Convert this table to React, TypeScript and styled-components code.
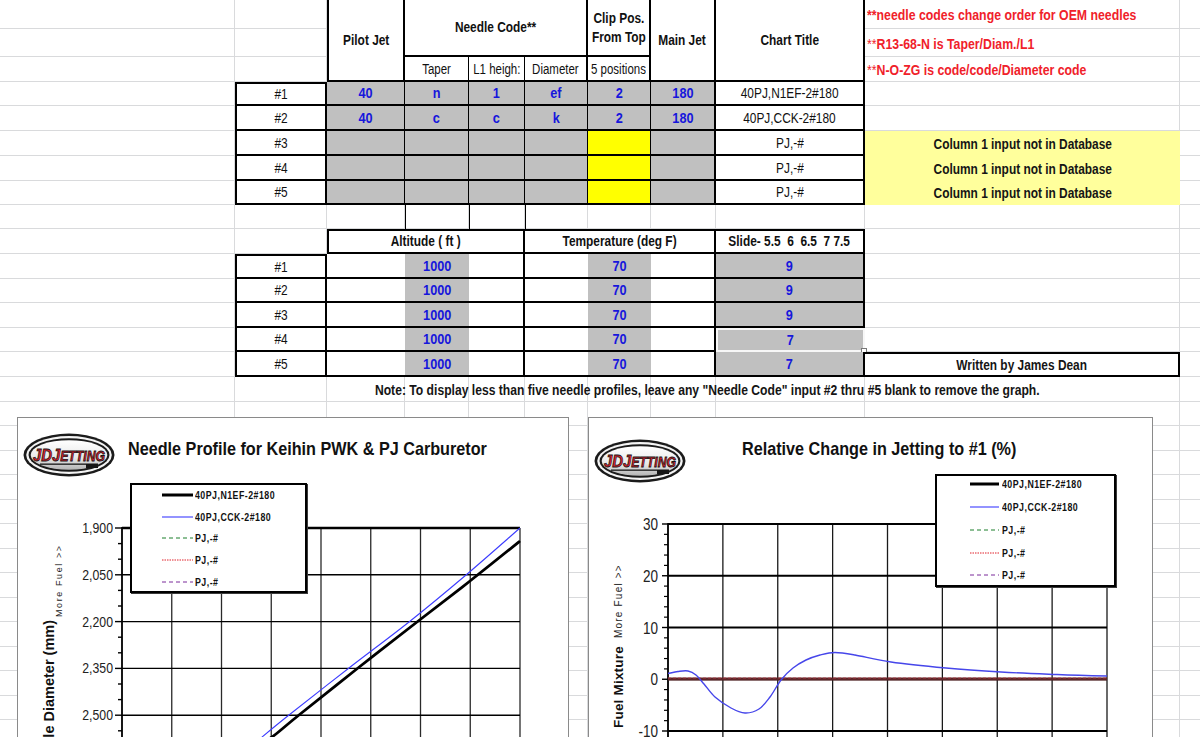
import React from "react";
import styled, { createGlobalStyle, css } from "styled-components";

const SANS = `"Liberation Sans", Arial, Helvetica, sans-serif`;

const GlobalStyle = createGlobalStyle`
  *, *::before, *::after { box-sizing: border-box; }
  html, body { margin: 0; padding: 0; background: #ffffff; }
  body { font-family: ${SANS}; color: #000; }
`;

/* Arial-Narrow look: Liberation Sans compressed horizontally */
const squeeze = (origin: string, k = 0.82) => css`
  display: inline-block;
  transform: scaleX(${k});
  transform-origin: ${origin};
`;

const COLS = [235, 92, 78, 64, 56, 63, 63, 65, 149, 315, 40];
const ROWS = [29, 28, 25, 24, 25, 25, 25, 24, 24, 25, 25, 24, 25, 24, 25, 25, 24, 25, 24, 25, 24, 25, 24, 25, 24, 25, 24, 25, 24, 25];

const Sheet = styled.div`
  position: relative;
  width: 1200px;
  height: 737px;
  overflow: hidden;
  display: grid;
  grid-template-columns: ${COLS.map((w) => `${w}px`).join(" ")};
  grid-template-rows: ${ROWS.map((h) => `${h}px`).join(" ")};
  background: #fff;
`;

const GridCell = styled.div<{ $r: number; $c: number }>`
  grid-row: ${(p) => p.$r + 1};
  grid-column: ${(p) => p.$c + 1};
  border-right: 1px solid #d9dadc;
  border-bottom: 1px solid #d9dadc;
`;

type Fill = "none" | "white" | "gray" | "yellow" | "pale";
const FILL: Record<Fill, string> = {
  none: "transparent",
  white: "#ffffff",
  gray: "#c0c0c0",
  yellow: "#ffff00",
  pale: "#ffff9c",
};

interface CellProps {
  $r: number;
  $c: number;
  $rs?: number;
  $cs?: number;
  $bt?: number;
  $br?: number;
  $bb?: number;
  $bl?: number;
  $fill?: Fill;
  $left?: boolean;
  $sel?: boolean;
}

const Cell = styled.div<CellProps>`
  grid-row: ${(p) => `${p.$r + 1} / span ${p.$rs ?? 1}`};
  grid-column: ${(p) => `${p.$c + 1} / span ${p.$cs ?? 1}`};
  background: ${(p) => FILL[p.$fill ?? "none"]};
  border-style: solid;
  border-color: ${(p) => (p.$sel ? "#f7f7f7" : "#000")};
  border-width: ${(p) =>
    p.$sel ? "2px" : `${p.$bt ?? 0}px ${p.$br ?? 0}px ${p.$bb ?? 0}px ${p.$bl ?? 0}px`};
  display: flex;
  align-items: center;
  justify-content: ${(p) => (p.$left ? "flex-start" : "center")};
  padding-left: ${(p) => (p.$left ? "2px" : "0")};
  white-space: pre;
  position: relative;
  z-index: 1;
`;

const FillHandle = styled.span`
  position: absolute;
  right: -4px;
  bottom: -4px;
  width: 6px;
  height: 6px;
  background: #fff;
  border: 1px solid #777;
  z-index: 2;
`;

const Head = styled.span`
  ${squeeze("center")}
  font-weight: 700;
  font-size: 14.5px;
  line-height: 19px;
  text-align: center;
  color: #111;
`;
const Sub = styled.span`
  ${squeeze("center")}
  font-size: 14px;
  color: #111;
`;
const Label = styled.span`
  ${squeeze("center")}
  font-size: 14.5px;
  color: #111;
`;
const Val = styled.span`
  ${squeeze("center")}
  font-weight: 700;
  font-size: 15.5px;
  color: #1616dc;
`;
const Plain = styled.span`
  ${squeeze("center")}
  font-size: 14.5px;
  color: #111;
`;
const Red = styled.span`
  ${squeeze("left center")}
  color: #f0212a;
  font-weight: 700;
  font-size: 15px;
`;
const Ast = styled.span`
  font-weight: 400;
`;
const Warn = styled.span<{ $big?: boolean }>`
  ${squeeze("center")}
  font-weight: 700;
  font-size: ${(p) => (p.$big ? "14.8px" : "14.5px")};
  color: #151515;
`;

/* ---------------- charts ---------------- */

const ChartFrame = styled.div<{ $x: number; $y: number; $w: number }>`
  position: absolute;
  left: ${(p) => p.$x}px;
  top: ${(p) => p.$y}px;
  width: ${(p) => p.$w}px;
  height: 340px;
  background: #fff;
  border: 1px solid #8a8a8a;
  z-index: 3;
  display: flex;
  flex-direction: column;
`;

const ChartHeader = styled.div<{ $h: number; $pl: number; $pt: number; $gap: number }>`
  height: ${(p) => p.$h}px;
  flex-shrink: 0;
  display: flex;
  align-items: flex-start;
  padding-left: ${(p) => p.$pl}px;
  padding-top: ${(p) => p.$pt}px;
  gap: ${(p) => p.$gap}px;
`;

const ChartTitle = styled.div<{ $mt: number }>`
  ${squeeze("left center", 0.875)}
  margin-top: ${(p) => p.$mt}px;
  font-weight: 700;
  font-size: 18.5px;
  line-height: 20px;
  white-space: nowrap;
  color: #111;
`;

const PlotSvg = styled.svg`
  display: block;
  flex-shrink: 0;
  text {
    font-family: ${SANS};
  }
`;

const LegendBox = styled.div<{ $x: number; $y: number; $w: number; $h: number }>`
  position: absolute;
  left: ${(p) => p.$x}px;
  top: ${(p) => p.$y}px;
  width: ${(p) => p.$w}px;
  height: ${(p) => p.$h}px;
  background: #fff;
  border: 2px solid #000;
  box-shadow: 1px 1px 0 #3a3a3a;
  z-index: 2;
  overflow: hidden;
`;

const LegendList = styled.div<{ $mt: number; $pl: number }>`
  display: flex;
  flex-direction: column;
  margin-top: ${(p) => p.$mt}px;
  padding-left: ${(p) => p.$pl}px;
`;

const LegendRow = styled.div<{ $h: number; $gap: number }>`
  height: ${(p) => p.$h}px;
  display: flex;
  align-items: center;
  gap: ${(p) => p.$gap}px;
  white-space: nowrap;
`;

const LegendText = styled.span`
  ${squeeze("left center", 0.8)}
  font-size: 11px;
  font-weight: 700;
  letter-spacing: 0.6px;
  color: #111;
`;

const SERIES = [
  { name: "40PJ,N1EF-2#180", color: "#000", w: 3, dash: undefined as string | undefined },
  { name: "40PJ,CCK-2#180", color: "#3b3bff", w: 1.1, dash: undefined },
  { name: "PJ,-#", color: "#1b7f2a", w: 1, dash: "4 3" },
  { name: "PJ,-#", color: "#e0202a", w: 1, dash: "1.5 1" },
  { name: "PJ,-#", color: "#7a2a9a", w: 1, dash: "4 3" },
];

function Legend(props: {
  x: number; y: number; w: number; h: number; mt: number; pl: number; rowH: number; sw: number; gap: number;
}) {
  return (
    <LegendBox $x={props.x} $y={props.y} $w={props.w} $h={props.h}>
      <LegendList $mt={props.mt} $pl={props.pl}>
        {SERIES.map((s, i) => (
          <LegendRow key={i} $h={props.rowH} $gap={props.gap}>
            <svg width={props.sw} height="6" viewBox={`0 0 ${props.sw} 6`}>
              <line x1="0" y1="3" x2={props.sw} y2="3" stroke={s.color} strokeWidth={s.w} strokeDasharray={s.dash} />
            </svg>
            <LegendText>{s.name}</LegendText>
          </LegendRow>
        ))}
      </LegendList>
    </LegendBox>
  );
}

function JDLogo({ id }: { id: string }) {
  return (
    <svg width="92" height="44" viewBox="0 0 92 44">
      <defs>
        <linearGradient id={id} x1="0" y1="0" x2="0" y2="1">
          <stop offset="0" stopColor="#ffffff" />
          <stop offset="0.6" stopColor="#e8e8e8" />
          <stop offset="1" stopColor="#b4b4b4" />
        </linearGradient>
      </defs>
      <ellipse cx="46" cy="22" rx="45.5" ry="21.5" fill="#1b1b1b" />
      <ellipse cx="46" cy="22" rx="42.8" ry="19" fill="#f4f4f4" />
      <ellipse cx="46" cy="22" rx="40.5" ry="16.8" fill="#1b1b1b" />
      <ellipse cx="46" cy="22" rx="38.3" ry="14.8" fill={`url(#${id})`} />
      <text
        x="46"
        y="28"
        textAnchor="middle"
        fontFamily={SANS}
        fontWeight="900"
        fontStyle="italic"
        fill="#e4222b"
        stroke="#161616"
        strokeWidth="0.8"
        fontSize="14"
        textLength="72"
        lengthAdjust="spacingAndGlyphs"
      >
        <tspan fontSize="17">JD</tspan>
        <tspan fontSize="17">J</tspan>ETTING
      </text>
      <rect x="17" y="30.5" width="58" height="1.3" fill="#161616" />
      <rect x="63" y="31" width="12" height="4" fill="#161616" />
    </svg>
  );
}

/* compressed SVG text */
function NText(props: {
  x: number; y: number; size: number; anchor?: "start" | "end" | "middle"; bold?: boolean; k?: number; children: React.ReactNode;
}) {
  return (
    <g transform={`translate(${props.x},${props.y}) scale(${props.k ?? 0.82},1)`}>
      <text x={0} y={0} textAnchor={props.anchor ?? "start"} fontSize={props.size} fontWeight={props.bold ? 700 : 400} fill="#222">
        {props.children}
      </text>
    </g>
  );
}

function smooth(pts: number[][]): string {
  let d = `M${pts[0][0]},${pts[0][1]}`;
  for (let i = 0; i < pts.length - 1; i++) {
    const p0 = pts[i - 1] ?? pts[i];
    const p1 = pts[i];
    const p2 = pts[i + 1];
    const p3 = pts[i + 2] ?? p2;
    const c1x = p1[0] + (p2[0] - p0[0]) / 6;
    const c1y = p1[1] + (p2[1] - p0[1]) / 6;
    const c2x = p2[0] - (p3[0] - p1[0]) / 6;
    const c2y = p2[1] - (p3[1] - p1[1]) / 6;
    d += ` C${c1x.toFixed(1)},${c1y.toFixed(1)} ${c2x.toFixed(1)},${c2y.toFixed(1)} ${p2[0]},${p2[1]}`;
  }
  return d;
}

function LeftPlot() {
  const x0 = 122;
  const x1 = 520;
  const y0 = 528;
  const dy = 46.8;
  const dx = (x1 - x0) / 8;
  const labels = ["1,900", "2,050", "2,200", "2,350", "2,500", "2,650"];
  const black = [
    [264, 742], [276, 734], [299, 715], [358, 668], [417, 622], [470, 581], [520, 541],
  ];
  const blue = [
    [256, 742], [289, 715], [349, 668], [409, 622], [466, 575], [520, 528],
  ];
  return (
    <PlotSvg width={550} height={260} viewBox="18 482 550 260">
      {Array.from({ length: 9 }, (_, i) => (
        <line key={`v${i}`} x1={x0 + i * dx} y1={y0} x2={x0 + i * dx} y2={760} stroke="#2a2a2a" strokeWidth="1.3" />
      ))}
      {labels.map((l, i) => (
        <line key={`h${i}`} x1={x0} y1={y0 + i * dy} x2={x1} y2={y0 + i * dy} stroke="#000" strokeWidth={i === 0 ? 2.4 : 1.4} />
      ))}
      {labels.map((l, i) => (
        <g key={`t${i}`}>
          <line x1={x0 - 7} y1={y0 + i * dy} x2={x0} y2={y0 + i * dy} stroke="#000" strokeWidth="1.4" />
          <line x1={x0 - 4} y1={y0 + i * dy + dy / 3} x2={x0} y2={y0 + i * dy + dy / 3} stroke="#000" strokeWidth="1.4" />
          <line x1={x0 - 4} y1={y0 + i * dy + (2 * dy) / 3} x2={x0} y2={y0 + i * dy + (2 * dy) / 3} stroke="#000" strokeWidth="1.4" />
          <NText x={113} y={y0 + i * dy + 5} size={15} anchor="end">{l}</NText>
        </g>
      ))}
      <line x1={x0} y1={y0 - 1} x2={x0} y2={760} stroke="#000" strokeWidth="1.6" />
      <text transform="translate(54,620) rotate(-90)" textAnchor="end" fontSize="14.5" fontWeight="700" fill="#111">
        Needle Diameter (mm)
      </text>
      <text transform="translate(62,617) rotate(-90)" textAnchor="start" fontSize="9" letterSpacing="1.6" fill="#222">
        More Fuel &gt;&gt;
      </text>
      <path d={smooth(blue)} fill="none" stroke="#3b3bff" strokeWidth="1.1" />
      <path d={smooth(black)} fill="none" stroke="#000" strokeWidth="2.8" />
    </PlotSvg>
  );
}

function RightPlot() {
  const x0 = 668;
  const x1 = 1107;
  const y0 = 524;
  const dy = 51.75;
  const dx = (x1 - x0) / 8;
  const labels = ["30", "20", "10", "0", "-10"];
  const blue = [
    [668, 673.5], [678, 671.5], [688, 671], [696, 675], [704, 684], [715, 697], [731, 708], [745, 713],
    [759, 709], [770, 697], [781, 680], [793, 668], [806, 660], [820, 655], [835, 652.5], [855, 655],
    [891, 662], [946, 668], [1001, 672], [1057, 674.5], [1107, 676],
  ];
  return (
    <PlotSvg width={563} height={270} viewBox="589 476 563 270">
      {Array.from({ length: 9 }, (_, i) => (
        <line key={`v${i}`} x1={x0 + i * dx} y1={y0} x2={x0 + i * dx} y2={760} stroke="#1a1a1a" strokeWidth="1.3" />
      ))}
      {labels.map((l, i) => (
        <line key={`h${i}`} x1={x0} y1={y0 + i * dy} x2={x1} y2={y0 + i * dy} stroke="#000" strokeWidth="2" />
      ))}
      {labels.map((l, i) => (
        <g key={`t${i}`}>
          <line x1={x0 - 6} y1={y0 + i * dy} x2={x0} y2={y0 + i * dy} stroke="#000" strokeWidth="1.4" />
          {[1, 2, 3, 4].map((k) => (
            <line key={k} x1={x0 - 4} y1={y0 + i * dy + (k * dy) / 5} x2={x0} y2={y0 + i * dy + (k * dy) / 5} stroke="#000" strokeWidth="1.2" />
          ))}
          <NText x={658} y={y0 + i * dy + 6} size={16.5} anchor="end">{l}</NText>
        </g>
      ))}
      <line x1={x0} y1={y0 - 1} x2={x0} y2={760} stroke="#000" strokeWidth="1.6" />
      <text transform="translate(623,728) rotate(-90)" textAnchor="start" fontSize="13.5" fontWeight="700" letterSpacing="0.2" fill="#111">
        Fuel Mixture
      </text>
      <text transform="translate(622,638) rotate(-90)" textAnchor="start" fontSize="10" letterSpacing="1.2" fill="#222">
        More Fuel &gt;&gt;
      </text>
      <line x1={x0} y1={679} x2={x1} y2={679} stroke="#5e2629" strokeWidth="3" />
      <line x1={x0} y1={678} x2={x1} y2={678} stroke="#b03a44" strokeWidth="0.8" strokeDasharray="3 2" />
      <path d={smooth(blue)} fill="none" stroke="#4646ea" strokeWidth="1.4" />
    </PlotSvg>
  );
}

/* ---------------- data ---------------- */

const UPPER = [
  { pilot: "40", taper: "n", l1: "1", diam: "ef", clip: "2", main: "180", title: "40PJ,N1EF-2#180" },
  { pilot: "40", taper: "c", l1: "c", diam: "k", clip: "2", main: "180", title: "40PJ,CCK-2#180" },
  { pilot: "", taper: "", l1: "", diam: "", clip: "", main: "", title: "PJ,-#" },
  { pilot: "", taper: "", l1: "", diam: "", clip: "", main: "", title: "PJ,-#" },
  { pilot: "", taper: "", l1: "", diam: "", clip: "", main: "", title: "PJ,-#" },
];

const SLIDES = ["9", "9", "9", "7", "7"];

export default function App() {
  const bg: React.ReactNode[] = [];
  ROWS.forEach((_, r) =>
    COLS.forEach((__, c) => bg.push(<GridCell key={`g${r}-${c}`} $r={r} $c={c} />))
  );

  return (
    <>
      <GlobalStyle />
      <Sheet>
        {bg}

        {/* upper table header */}
        <Cell $r={0} $c={2} $rs={3} $fill="white" $bl={2} $br={2} $bb={2}>
          <Head>Pilot Jet</Head>
        </Cell>
        <Cell $r={0} $c={3} $rs={2} $cs={3} $fill="white" $br={2} $bb={2}>
          <Head>Needle Code**</Head>
        </Cell>
        <Cell $r={0} $c={6} $rs={2} $fill="white" $br={2} $bb={2}>
          <Head>{"Clip Pos.\nFrom Top"}</Head>
        </Cell>
        <Cell $r={2} $c={3} $fill="white" $br={1} $bb={2}>
          <Sub>Taper</Sub>
        </Cell>
        <Cell $r={2} $c={4} $fill="white" $br={1} $bb={2}>
          <Sub>L1 heigh:</Sub>
        </Cell>
        <Cell $r={2} $c={5} $fill="white" $br={2} $bb={2}>
          <Sub>Diameter</Sub>
        </Cell>
        <Cell $r={2} $c={6} $fill="white" $br={2} $bb={2}>
          <Sub>5 positions</Sub>
        </Cell>
        <Cell $r={0} $c={7} $rs={3} $fill="white" $br={2} $bb={2}>
          <Head>Main Jet</Head>
        </Cell>
        <Cell $r={0} $c={8} $rs={3} $fill="white" $br={2} $bb={2}>
          <Head>Chart Title</Head>
        </Cell>

        {/* notes */}
        <Cell $r={0} $c={9} $left>
          <Red>**needle codes change order for OEM needles</Red>
        </Cell>
        <Cell $r={1} $c={9} $left>
          <Red>
            <Ast>**</Ast>R13-68-N is Taper/Diam./L1
          </Red>
        </Cell>
        <Cell $r={2} $c={9} $left>
          <Red>
            <Ast>**</Ast>N-O-ZG is code/code/Diameter code
          </Red>
        </Cell>

        {/* upper table rows */}
        {UPPER.map((row, i) => {
          const r = 3 + i;
          return (
            <React.Fragment key={`u${i}`}>
              <Cell $r={r} $c={1} $fill="white" $bt={i === 0 ? 2 : 0} $bl={2} $br={2} $bb={2}>
                <Label>{`#${i + 1}`}</Label>
              </Cell>
              <Cell $r={r} $c={2} $fill="gray" $br={1} $bb={2}>
                <Val>{row.pilot}</Val>
              </Cell>
              <Cell $r={r} $c={3} $fill="gray" $br={1} $bb={2}>
                <Val>{row.taper}</Val>
              </Cell>
              <Cell $r={r} $c={4} $fill="gray" $br={1} $bb={2}>
                <Val>{row.l1}</Val>
              </Cell>
              <Cell $r={r} $c={5} $fill="gray" $br={1} $bb={2}>
                <Val>{row.diam}</Val>
              </Cell>
              <Cell $r={r} $c={6} $fill={i < 2 ? "gray" : "yellow"} $br={1} $bb={2}>
                <Val>{row.clip}</Val>
              </Cell>
              <Cell $r={r} $c={7} $fill="gray" $br={2} $bb={2}>
                <Val>{row.main}</Val>
              </Cell>
              <Cell $r={r} $c={8} $fill="white" $br={2} $bb={2}>
                <Plain>{row.title}</Plain>
              </Cell>
              {i >= 2 && (
                <Cell $r={r} $c={9} $fill="pale">
                  <Warn>Column 1 input not in Database</Warn>
                </Cell>
              )}
            </React.Fragment>
          );
        })}

        {/* spacer row lines */}
        <Cell $r={8} $c={3} $bl={1} />
        <Cell $r={8} $c={4} $bl={1} />
        <Cell $r={8} $c={5} $bl={1} />

        {/* lower table header */}
        <Cell $r={9} $c={2} $cs={3} $fill="white" $bt={2} $bl={2} $br={2} $bb={2}>
          <Head>Altitude ( ft )</Head>
        </Cell>
        <Cell $r={9} $c={5} $cs={3} $fill="white" $bt={2} $br={2} $bb={2}>
          <Head>Temperature (deg F)</Head>
        </Cell>
        <Cell $r={9} $c={8} $fill="white" $bt={2} $br={2} $bb={2}>
          <Head>{"Slide- 5.5  6  6.5  7 7.5"}</Head>
        </Cell>

        {SLIDES.map((s, i) => {
          const r = 10 + i;
          return (
            <React.Fragment key={`l${i}`}>
              <Cell $r={r} $c={1} $fill="white" $bt={i === 0 ? 2 : 0} $bl={2} $br={2} $bb={2}>
                <Label>{`#${i + 1}`}</Label>
              </Cell>
              <Cell $r={r} $c={2} $fill="white" $bb={2} />
              <Cell $r={r} $c={3} $fill="gray" $bb={2}>
                <Val>1000</Val>
              </Cell>
              <Cell $r={r} $c={4} $fill="white" $br={2} $bb={2} />
              <Cell $r={r} $c={5} $fill="white" $bb={2} />
              <Cell $r={r} $c={6} $fill="gray" $bb={2}>
                <Val>70</Val>
              </Cell>
              <Cell $r={r} $c={7} $fill="white" $br={2} $bb={2} />
              <Cell $r={r} $c={8} $fill="gray" $br={2} $bb={2} $sel={i === 3}>
                <Val>{s}</Val>
                {i === 3 && <FillHandle />}
              </Cell>
            </React.Fragment>
          );
        })}

        <Cell $r={14} $c={9} $fill="white" $bt={2} $br={2} $bb={2}>
          <Warn>Written by James Dean</Warn>
        </Cell>

        <Cell $r={15} $c={1} $cs={9}>
          <Warn $big>Note: To display less than five needle profiles, leave any "Needle Code" input #2 thru #5 blank to remove the graph.</Warn>
        </Cell>

        {/* left chart */}
        <ChartFrame $x={17} $y={417} $w={552}>
          <ChartHeader $h={64} $pl={5} $pt={15} $gap={13}>
            <JDLogo id="logoL" />
            <ChartTitle $mt={6}>Needle Profile for Keihin PWK &amp; PJ Carburetor</ChartTitle>
          </ChartHeader>
          <LeftPlot />
          <Legend x={112} y={65} w={177} h={110} mt={-1} pl={30} rowH={21.8} sw={31} gap={2} />
        </ChartFrame>

        {/* right chart */}
        <ChartFrame $x={588} $y={417} $w={565}>
          <ChartHeader $h={58} $pl={5} $pt={21} $gap={56}>
            <JDLogo id="logoR" />
            <ChartTitle $mt={0}>Relative Change in Jetting to #1 (%)</ChartTitle>
          </ChartHeader>
          <RightPlot />
          <Legend x={346} y={56} w={181} h={113} mt={-3} pl={33} rowH={22.75} sw={29} gap={3} />
        </ChartFrame>
      </Sheet>
    </>
  );
}
